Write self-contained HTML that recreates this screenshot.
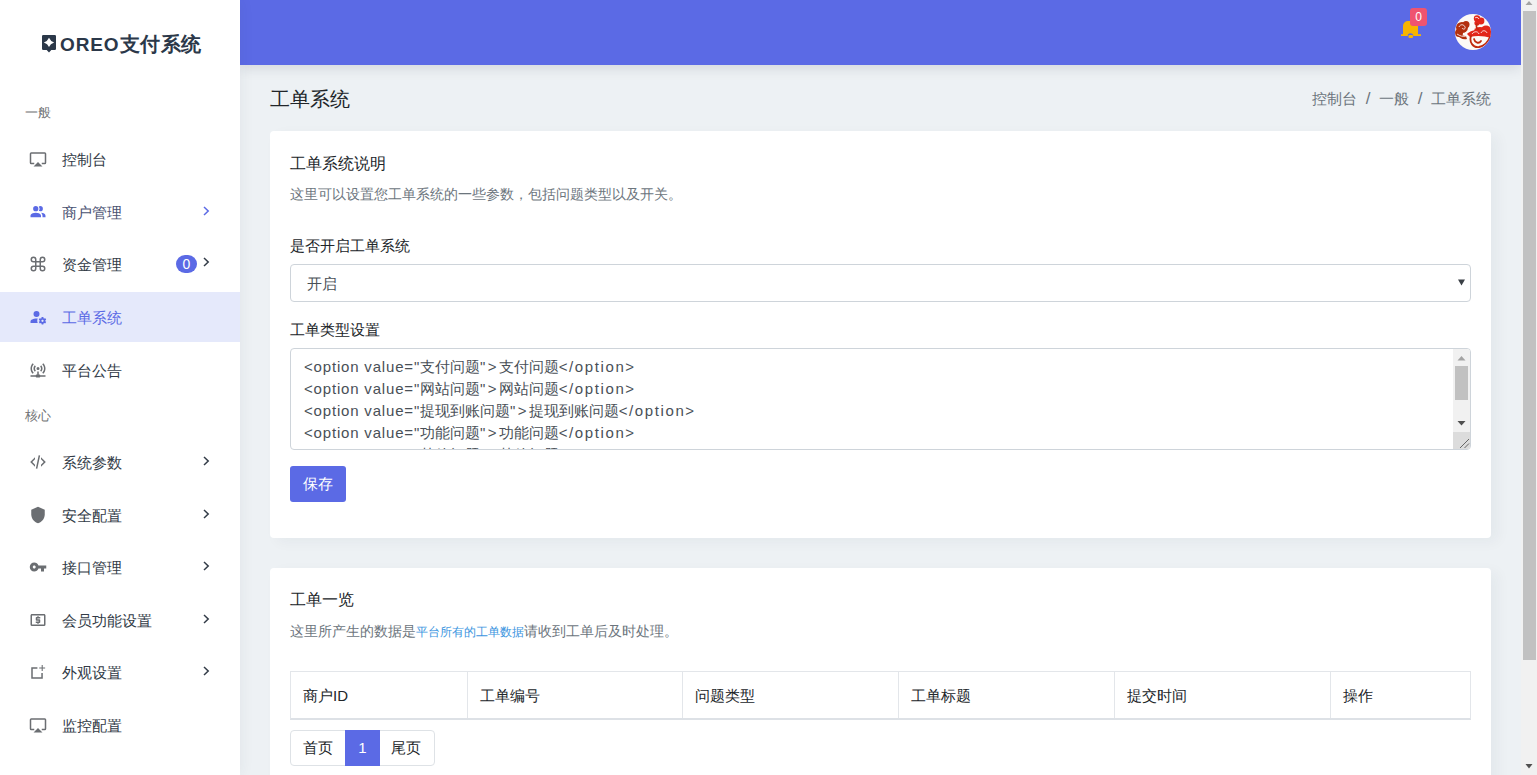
<!DOCTYPE html>
<html><head><meta charset="utf-8">
<style>
*{box-sizing:border-box;margin:0;padding:0}
html,body{width:1537px;height:775px;overflow:hidden}
body{font-family:"Liberation Sans",sans-serif;background:#edf1f4;position:relative;color:#343a40}
.abs{position:absolute}
#side{position:absolute;left:0;top:0;width:240px;height:775px;background:#fff;box-shadow:0 0 14px rgba(40,50,70,.07);z-index:3}
#hdr{position:absolute;left:240px;top:0;width:1281px;height:65px;background:#5b6ae5;box-shadow:0 3px 12px rgba(30,40,60,.13);z-index:2}
#sb{position:absolute;left:1521px;top:0;width:16px;height:775px;background:#f1f1f1;z-index:5}
.lbl{position:absolute;left:25px;font-size:13px;color:#707274;line-height:16px}
.mi{position:absolute;left:0;width:240px;height:50px}
.mi svg.ic{position:absolute;left:29px;top:16px;width:18px;height:18px;fill:#6b6e72}
.mi .t{position:absolute;left:62px;top:1px;line-height:50px;font-size:15px;color:#323b47}
.mi .chev{position:absolute;left:200px;top:18px;width:12px;height:12px}
.card{position:absolute;left:270px;width:1221px;background:#fff;border-radius:4px;box-shadow:7px 4px 14px rgba(30,40,60,.045)}
.ct{position:absolute;left:20px;font-size:16px;line-height:20px;color:#212529}
.cs{position:absolute;left:20px;font-size:14px;line-height:18px;color:#6c757d;white-space:nowrap}
.fl{position:absolute;left:20px;font-size:15px;line-height:20px;color:#212529}
.la{letter-spacing:1px}
.th{position:absolute;top:0;height:46px;line-height:48px;font-size:15px;color:#343a40;padding-left:13px;color:#212529;border-right:1px solid #e3e6ea}
</style></head><body>
<div id="side">
  <svg class="abs" style="left:42px;top:35px;width:14px;height:18px" viewBox="0 0 14 18"><path d="M1.2 0H12.8A1.2 1.2 0 0 1 14 1.2V13.8A1.2 1.2 0 0 1 12.8 15H9.3L7 17.4L4.7 15H1.2A1.2 1.2 0 0 1 0 13.8V1.2A1.2 1.2 0 0 1 1.2 0Z" fill="#2b3849"/><path d="M7 2.8Q8.3 6.1 12.1 7.4Q8.3 8.7 7 12.1Q5.7 8.7 1.9 7.4Q5.7 6.1 7 2.8Z" fill="#fff"/></svg>
  <div class="abs" style="left:60px;top:31px;font-size:20px;font-weight:bold;color:#2b3849;line-height:26px;white-space:nowrap"><span style="font-size:19px;letter-spacing:0.9px">OREO</span><span style="letter-spacing:0.6px">支付系统</span></div>
  <div class="lbl" style="top:105px">一般</div>
  <div class="mi" style="top:134px"><svg class="ic" viewBox="0 0 24 24"><path d="M6,22H18L12,16M21,3H3A2,2 0 0,0 1,5V17A2,2 0 0,0 3,19H7V17H3V5H21V17H17V19H21A2,2 0 0,0 23,17V5A2,2 0 0,0 21,3Z"/></svg><span class="t">控制台</span></div>
  <div class="mi" style="top:187px"><svg class="ic" viewBox="0 0 24 24" style="fill:#5b6ae5"><path d="M16,17V19H2V17C2,17 2,13 9,13C16,13 16,17 16,17M12.5,7.5A3.5,3.5 0 1,0 9,11A3.5,3.5 0 0,0 12.5,7.5M15.940,13A5.32,5.32 0 0,1 18,17V19H22V17C22,17 22,13.37 15.94,13M15,4A3.39,3.39 0 0,0 13.07,4.59A5,5 0 0,1 13.07,10.41A3.39,3.39 0 0,0 15,11A3.5,3.5 0 0,0 18.5,7.5A3.5,3.5 0 0,0 15,4Z"/></svg><span class="t" style="color:#4a5272">商户管理</span><svg class="chev" viewBox="0 0 12 12"><path d="M4 2L8.2 6L4 10" stroke="#5b6ae5" stroke-width="1.5" fill="none"/></svg></div>
  <div class="mi" style="top:239px"><svg class="ic" viewBox="0 0 24 24"><path d="M6,2A4,4 0 0,1 10,6V8H14V6A4,4 0 0,1 18,2A4,4 0 0,1 22,6A4,4 0 0,1 18,10H16V14H18A4,4 0 0,1 22,18A4,4 0 0,1 18,22A4,4 0 0,1 14,18V16H10V18A4,4 0 0,1 6,22A4,4 0 0,1 2,18A4,4 0 0,1 6,14H8V10H6A4,4 0 0,1 2,6A4,4 0 0,1 6,2M16,18A2,2 0 0,0 18,20A2,2 0 0,0 20,18A2,2 0 0,0 18,16H16V18M14,10H10V14H14V10M6,16A2,2 0 0,0 4,18A2,2 0 0,0 6,20A2,2 0 0,0 8,18V16H6M8,6A2,2 0 0,0 6,4A2,2 0 0,0 4,6A2,2 0 0,0 6,8H8V6M18,8A2,2 0 0,0 20,6A2,2 0 0,0 18,4A2,2 0 0,0 16,6V8H18Z"/></svg><span class="t">资金管理</span>
    <span class="abs" style="left:176px;top:16px;width:21px;height:18px;border-radius:9px;background:#5b6ae5;color:#fff;font-size:14px;line-height:18px;text-align:center">0</span>
    <svg class="chev" viewBox="0 0 12 12" style="top:17px"><path d="M4 2L8.2 6L4 10" stroke="#323b47" stroke-width="1.5" fill="none"/></svg></div>
  <div class="mi" style="top:292px;background:#e5e9fb"><svg class="ic" viewBox="0 0 24 24" style="fill:#5b6ae5"><path d="M10 4A4 4 0 0 0 6 8A4 4 0 0 0 10 12A4 4 0 0 0 14 8A4 4 0 0 0 10 4M17 12C16.87 12 16.76 12.09 16.74 12.21L16.55 13.53C16.25 13.66 15.96 13.82 15.7 14L14.46 13.5C14.35 13.5 14.22 13.5 14.15 13.63L13.15 15.36C13.09 15.47 13.11 15.6 13.21 15.68L14.27 16.5C14.25 16.67 14.24 16.83 14.24 17C14.24 17.17 14.25 17.33 14.27 17.5L13.21 18.32C13.12 18.4 13.09 18.53 13.15 18.64L14.15 20.37C14.21 20.5 14.34 20.5 14.46 20.5L15.7 20C15.96 20.18 16.24 20.35 16.55 20.47L16.74 21.79C16.76 21.91 16.86 22 17 22H19C19.11 22 19.22 21.91 19.24 21.79L19.43 20.47C19.73 20.34 20 20.18 20.27 20L21.5 20.5C21.63 20.5 21.76 20.5 21.83 20.37L22.83 18.64C22.89 18.53 22.86 18.4 22.77 18.32L21.7 17.5C21.72 17.33 21.74 17.17 21.74 17C21.74 16.83 21.73 16.67 21.7 16.5L22.76 15.68C22.85 15.6 22.88 15.47 22.82 15.36L21.82 13.63C21.76 13.5 21.63 13.5 21.5 13.5L20.27 14C20 13.82 19.73 13.65 19.42 13.53L19.23 12.21C19.22 12.09 19.11 12 19 12H17M10 14C5.58 14 2 15.79 2 18V20H11.68A7 7 0 0 1 11 17A7 7 0 0 1 11.64 14.09C11.11 14.03 10.56 14 10 14M18 15.5C18.83 15.5 19.5 16.17 19.5 17C19.5 17.83 18.83 18.5 18 18.5C17.16 18.5 16.5 17.83 16.5 17C16.5 16.17 17.17 15.5 18 15.5Z"/></svg><span class="t" style="color:#5b6ae5">工单系统</span></div>
  <div class="mi" style="top:345px"><svg class="ic" viewBox="0 0 24 24"><path d="M4.93,2.93C3.12,4.74 2,7.24 2,10C2,12.76 3.12,15.26 4.93,17.07L6.34,15.66C4.89,14.22 4,12.22 4,10C4,7.79 4.89,5.78 6.34,4.34L4.93,2.93M19.07,2.93L17.66,4.34C19.11,5.78 20,7.79 20,10C20,12.22 19.11,14.22 17.66,15.66L19.07,17.07C20.88,15.26 22,12.76 22,10C22,7.24 20.88,4.74 19.07,2.93M7.76,5.76C6.67,6.85 6,8.35 6,10C6,11.65 6.67,13.15 7.76,14.24L9.17,12.83C8.45,12.11 8,11.11 8,10C8,8.89 8.45,7.89 9.17,7.17L7.76,5.76M16.24,5.76L14.83,7.17C15.55,7.89 16,8.89 16,10C16,11.11 15.55,12.11 14.83,12.83L16.24,14.24C17.33,13.15 18,11.65 18,10C18,8.35 17.33,6.85 16.24,5.76M12,8A2,2 0 0,0 10,10A2,2 0 0,0 12,12A2,2 0 0,0 14,10A2,2 0 0,0 12,8M11,14V18H10A1,1 0 0,0 9,19H2V21H9A1,1 0 0,0 10,22H14A1,1 0 0,0 15,21H22V19H15A1,1 0 0,0 14,18H13V14H11Z"/></svg><span class="t">平台公告</span></div>
  <div class="lbl" style="top:408px">核心</div>
  <div class="mi" style="top:437px"><svg class="ic" viewBox="0 0 24 24"><path d="M12.89,3L14.85,3.4L11.11,21L9.15,20.6L12.89,3M19.59,12L16,8.41V5.58L22.42,12L16,18.41V15.58L19.59,12M1.58,12L8,5.58V8.41L4.41,12L8,15.58V18.41L1.58,12Z"/></svg><span class="t">系统参数</span><svg class="chev" viewBox="0 0 12 12"><path d="M4 2L8.2 6L4 10" stroke="#323b47" stroke-width="1.5" fill="none"/></svg></div>
  <div class="mi" style="top:490px"><svg class="ic" viewBox="0 0 24 24"><path d="M12,1L3,5V11C3,16.55 6.84,21.74 12,23C17.16,21.74 21,16.55 21,11V5L12,1Z"/></svg><span class="t">安全配置</span><svg class="chev" viewBox="0 0 12 12"><path d="M4 2L8.2 6L4 10" stroke="#323b47" stroke-width="1.5" fill="none"/></svg></div>
  <div class="mi" style="top:542px"><svg class="ic" viewBox="0 0 24 24"><path d="M7 14C5.9 14 5 13.1 5 12S5.9 10 7 10 9 10.9 9 12 8.1 14 7 14M12.6 10C11.8 7.7 9.6 6 7 6C3.7 6 1 8.7 1 12S3.7 18 7 18C9.6 18 11.8 16.3 12.6 14H16V18H20V14H23V10H12.6Z"/></svg><span class="t">接口管理</span><svg class="chev" viewBox="0 0 12 12"><path d="M4 2L8.2 6L4 10" stroke="#323b47" stroke-width="1.5" fill="none"/></svg></div>
  <div class="mi" style="top:595px"><svg class="ic" viewBox="0 0 24 24"><path d="M20,18H4V6H20M20,4H4C2.89,4 2,4.89 2,6V18A2,2 0 0,0 4,20H20A2,2 0 0,0 22,18V6C22,4.89 21.1,4 20,4M11,17H13V16H14A1,1 0 0,0 15,15V12A1,1 0 0,0 14,11H11V10H15V8H13V7H11V8H10A1,1 0 0,0 9,9V12A1,1 0 0,0 10,13H13V14H9V16H11V17Z"/></svg><span class="t">会员功能设置</span><svg class="chev" viewBox="0 0 12 12"><path d="M4 2L8.2 6L4 10" stroke="#323b47" stroke-width="1.5" fill="none"/></svg></div>
  <div class="mi" style="top:647px"><svg class="ic" viewBox="0 0 24 24"><path d="M3 5.6H11.2V7.6H5V19H16.4V13.3H18.4V21H3Z M16.9 2.7H18.3V6H21.5V7.4H18.3V10.7H16.9V7.4H13.6V6H16.9Z"/></svg><span class="t">外观设置</span><svg class="chev" viewBox="0 0 12 12"><path d="M4 2L8.2 6L4 10" stroke="#323b47" stroke-width="1.5" fill="none"/></svg></div>
  <div class="mi" style="top:700px"><svg class="ic" viewBox="0 0 24 24"><path d="M6,22H18L12,16M21,3H3A2,2 0 0,0 1,5V17A2,2 0 0,0 3,19H7V17H3V5H21V17H17V19H21A2,2 0 0,0 23,17V5A2,2 0 0,0 21,3Z"/></svg><span class="t">监控配置</span></div>
</div>
<div id="hdr"></div>
<div id="sb">
  <svg class="abs" style="left:0;top:0;width:16px;height:775px" viewBox="0 0 16 775"><path d="M4.5 5L8 1L11.5 5Z" fill="#a3a3a3"/><rect x="2" y="11" width="13" height="649" fill="#c1c1c1"/><path d="M4.5 764L8 768.5L11.5 764Z" fill="#505050"/></svg>
</div>

<div class="abs" style="left:1400px;top:20px;width:22px;height:18px;z-index:4">
  <svg width="22" height="18" viewBox="0 0 22 18"><path d="M3 14.3V6A5 5 0 0 1 8 1H13A5 5 0 0 1 18 6V14.3H21V16H13.3A2.8 2.8 0 0 0 7.7 16H1V14.3Z" fill="#f7b500"/><rect x="8.5" y="15" width="4.5" height="3" rx="1" fill="#f7b500"/></svg>
</div>
<span class="abs" style="left:1410px;top:8px;width:17px;height:18px;border-radius:3px;background:#ef5470;color:#fff;font-size:12px;line-height:18px;text-align:center;z-index:4">0</span>
<div class="abs" style="left:1455px;top:14px;width:36px;height:36px;border-radius:50%;background:#fdfaf6;z-index:4;overflow:hidden">
  <svg width="36" height="36" viewBox="0 0 36 36">
   <g fill="#b3300e"><ellipse cx="7" cy="13.5" rx="6" ry="5.5"/><circle cx="11" cy="10.5" r="3.5"/><ellipse cx="4" cy="19" rx="4" ry="4"/><path d="M1 20C4 24 8 26 12 25L11 22C8 22 6 21 4 18Z"/></g>
   <g fill="#e2261a"><circle cx="22" cy="4.5" r="3.2"/><circle cx="26" cy="7" r="3.4"/><circle cx="22" cy="9" r="2.6"/><ellipse cx="31" cy="16" rx="5" ry="4.5"/><ellipse cx="25" cy="17" rx="6" ry="4"/><path d="M12 20C16 16 25 14 36 17V24C30 22 22 21 15 23Z"/></g>
   <g fill="none" stroke="#c02a0e" stroke-width="1.8" stroke-linecap="round"><path d="M16 22C14 28 18 34 24 33C29 32 33 28 35 23"/><path d="M19 25C20 29 24 30 26 27"/><path d="M22 10C21 13 21 14 23 15"/></g>
   <g fill="none" stroke="#fff" stroke-width="0.8"><path d="M4 13C5 10 9 10 10 13C11 15 8 16 7 14"/><path d="M2 20C5 22 8 23 11 22"/><path d="M17 20C19 17 23 17 24 20"/><path d="M26 19C27 16 31 16 32 19"/><path d="M20 4C21 3 23 3 24 5"/></g>
  </svg>
</div>
<div class="abs" style="left:270px;top:86px;font-size:20px;line-height:26px;color:#212529;white-space:nowrap">工单系统</div>
<div class="abs" style="left:1180px;width:311px;top:89px;text-align:right;font-size:15px;line-height:20px;color:#6c757d;white-space:nowrap">控制台<span style="display:inline-block;width:22px;text-align:center;font-size:17px">/</span>一般<span style="display:inline-block;width:22px;text-align:center;font-size:17px">/</span>工单系统</div>
<div class="card" style="top:131px;height:407px">
  <div class="ct" style="top:23px">工单系统说明</div>
  <div class="cs" style="top:54px">这里可以设置您工单系统的一些参数，包括问题类型以及开关。</div>
  <div class="fl" style="top:105px">是否开启工单系统</div>
  <div class="abs" style="left:20px;top:133px;width:1181px;height:38px;border:1px solid #ced4da;border-radius:4px;background:#fff">
    <span class="abs" style="left:16px;top:1px;line-height:36px;font-size:15px;color:#495057">开启</span>
    <svg class="abs" style="left:1167px;top:14px;width:7px;height:7px" viewBox="0 0 7 7"><path d="M0 0.5H7L3.5 6.5Z" fill="#3a3f45"/></svg>
  </div>
  <div class="fl" style="top:189px">工单类型设置</div>
  <div class="abs" style="left:20px;top:217px;width:1181px;height:102px;border:1px solid #ced4da;border-radius:4px;background:#fff;overflow:hidden">
    <div class="abs" style="left:13px;top:7px;font-size:15px;line-height:22px;color:#495057;white-space:nowrap"><span style="letter-spacing:.82px">&lt;option value="</span>支付问题<span style="letter-spacing:2.3px">"&gt;</span>支付问题<span style="letter-spacing:1.6px">&lt;/option&gt;</span><br><span style="letter-spacing:.82px">&lt;option value="</span>网站问题<span style="letter-spacing:2.3px">"&gt;</span>网站问题<span style="letter-spacing:1.6px">&lt;/option&gt;</span><br><span style="letter-spacing:.82px">&lt;option value="</span>提现到账问题<span style="letter-spacing:2.3px">"&gt;</span>提现到账问题<span style="letter-spacing:1.6px">&lt;/option&gt;</span><br><span style="letter-spacing:.82px">&lt;option value="</span>功能问题<span style="letter-spacing:2.3px">"&gt;</span>功能问题<span style="letter-spacing:1.6px">&lt;/option&gt;</span><br><span style="letter-spacing:.82px">&lt;option value="</span>其他问题<span style="letter-spacing:2.3px">"&gt;</span>其他问题<span style="letter-spacing:1.6px">&lt;/option&gt;</span></div>
    <svg class="abs" style="left:1162px;top:0;width:17px;height:100px" viewBox="0 0 17 100"><rect width="17" height="100" fill="#f1f1f1"/><path d="M4.5 11.5L8.5 7L12.5 11.5Z" fill="#a3a3a3"/><rect x="2" y="17" width="13" height="34" fill="#c1c1c1"/><path d="M4.5 72L8.5 76.5L12.5 72Z" fill="#505050"/><rect y="83" width="17" height="17" fill="#dcdcdc"/><path d="M7 99L16 90M11.5 99L16 94.5" stroke="#666" stroke-width="1"/></svg>
  </div>
  <div class="abs" style="left:20px;top:335px;width:56px;height:36px;border-radius:3px;background:#5b6ae5;color:#fff;font-size:15px;line-height:35px;text-align:center">保存</div>
</div>
<div class="card" style="top:568px;height:230px">
  <div class="ct" style="top:22px">工单一览</div>
  <div class="cs" style="top:54px">这里所产生的数据是<span style="color:#3b95e0;font-size:12px">平台所有的工单数据</span>请收到工单后及时处理。</div>
  <div class="abs" style="left:20px;top:103px;width:1181px;height:49px;border:1px solid #e3e6ea;border-bottom:2px solid #dde1e6">
    <div class="th" style="left:0;width:177px;padding-left:12px">商户ID</div>
    <div class="th" style="left:176px;width:216px">工单编号</div>
    <div class="th" style="left:391px;width:217px">问题类型</div>
    <div class="th" style="left:607px;width:217px">工单标题</div>
    <div class="th" style="left:823px;width:217px">提交时间</div>
    <div class="th" style="left:1039px;width:140px;border-right:0">操作</div>
  </div>
  <div class="abs" style="left:20px;top:162px;width:145px;height:36px;border:1px solid #dee2e6;border-radius:4px;background:#fff">
    <span class="abs" style="left:12px;top:-1px;line-height:35px;font-size:15px;color:#212529">首页</span>
    <span class="abs" style="left:54px;top:-1px;width:35px;height:36px;background:#5b6ae5;color:#fff;line-height:36px;font-size:15px;text-align:center">1</span>
    <span class="abs" style="left:100px;top:-1px;line-height:35px;font-size:15px;color:#212529">尾页</span>
  </div>
</div>

</body></html>
